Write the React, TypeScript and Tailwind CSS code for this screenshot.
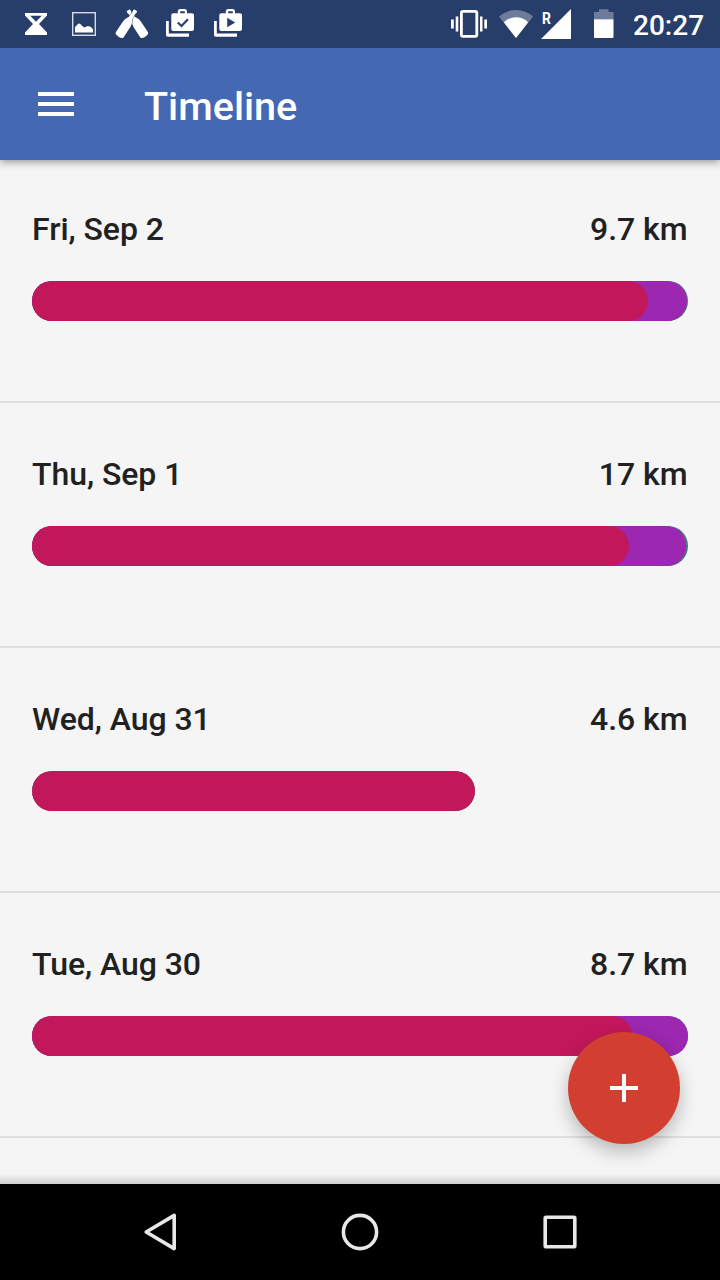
import React from 'react';

interface Day {
  date: string;
  distance: string;
  // bar widths in px, drawn on top of each other
  total: number;
  cycling?: number;
  walking: number;
}

const days: Day[] = [
  { date: 'Fri, Sep 2', distance: '9.7 km', total: 656, cycling: 655.3, walking: 616 },
  { date: 'Thu, Sep 1', distance: '17 km', total: 656, cycling: 654, walking: 597 },
  { date: 'Wed, Aug 31', distance: '4.6 km', total: 443, walking: 443 },
  { date: 'Tue, Aug 30', distance: '8.7 km', total: 656, cycling: 656, walking: 600 },
];

const bottlePath =
  'M-2 0.6Q-2 0 -1.4 0H1.4Q2 0 2 0.6V2.4L1.6 3L2 9Q4.6 13 4.6 16.5V29Q4.6 31.4 0 31.4Q-4.6 31.4 -4.6 29V16.5Q-4.6 13 -2 9L-1.6 3L-2 2.4Z';

const StatusBar: React.FC = () => (
  <div className="flex h-12 justify-between bg-[#283e6a] text-white">
    <div className="flex pl-3">
      {/* Hourglass */}
      <svg className="h-12 w-12" viewBox="0 0 48 48" fill="currentColor">
        <path
          fillRule="evenodd"
          d="M13 13H35V15.5L27 24L35 32.5V35H13V32.5L21 24L13 15.5ZM18.2 15.7L24 21.8L29.8 15.7Z"
        />
      </svg>
      {/* Picture */}
      <svg className="h-12 w-12" viewBox="0 0 48 48" fill="currentColor">
        <rect x="12.7" y="12.7" width="22.6" height="22.6" fill="none" stroke="#d5dae4" strokeWidth="1.4" />
        <path d="M15 32.5V27L18.5 23.5L20 23.8L24 27.5L28 26L31 27L33 29.5V32.5Z" />
      </svg>
      {/* Crossed bottles */}
      <svg className="h-12 w-12" viewBox="0 0 48 48" fill="currentColor">
        <path d={bottlePath} transform="translate(20.2 10.3) rotate(-33)" />
        <path
          d={bottlePath}
          transform="translate(27.6 10.3) rotate(33)"
          stroke="#283e6a"
          strokeWidth="0.8"
          paintOrder="stroke"
        />
      </svg>
      {/* Bags */}
      <svg className="h-12 w-12" viewBox="0 0 48 48" fill="currentColor">
        <path d="M10 21H12.8V33.5H33V36.7H12Q10 36.7 10 34.7Z" />
        <path
          fillRule="evenodd"
          d="M15.3 15Q15.3 13.2 17.3 13.2H21.8V11.5Q21.8 9 24.3 9H28.5Q31 9 31 11.5V13.2H36Q38 13.2 38 15.2V29Q38 31 36 31H17.3Q15.3 31 15.3 29ZM24.2 13.2H28.8V11.3H24.2Z"
        />
        <path d="M21.8 22.5L25.5 26L32 19.3" fill="none" stroke="#283e6a" strokeWidth="2.2" />
      </svg>
      <svg className="h-12 w-12" viewBox="0 0 48 48" fill="currentColor">
        <path d="M10 21H12.8V33.5H33V36.7H12Q10 36.7 10 34.7Z" />
        <path
          fillRule="evenodd"
          d="M15.3 15Q15.3 13.2 17.3 13.2H21.8V11.5Q21.8 9 24.3 9H28.5Q31 9 31 11.5V13.2H36Q38 13.2 38 15.2V29Q38 31 36 31H17.3Q15.3 31 15.3 29ZM24.2 13.2H28.8V11.3H24.2ZM23.2 17.8V27.2L31.2 22.5Z"
        />
      </svg>
    </div>

    <div className="flex pr-4">
      {/* Vibrate */}
      <svg className="h-12 w-9" viewBox="0 0 36 48" fill="currentColor">
        <rect x="10.4" y="11.4" width="15.4" height="25" rx="1.6" fill="none" stroke="currentColor" strokeWidth="2.8" />
        <path d="M0 19.5H2.8V28.5H0ZM4.7 16.5H7.3V31.5H4.7ZM29 16.5H31.5V31.5H29ZM33.3 19.5H36V28.5H33.3Z" />
      </svg>
      {/* Wifi */}
      <svg className="ml-3 h-12 w-[34px]" viewBox="0 0 34 48" fill="currentColor">
        <path fillOpacity="0.32" d="M17 38L0 16.5Q7.5 10 17 10Q26.5 10 34 16.5Z" />
        <path d="M17 38L4.8 22.2Q10 17.3 17 17.3Q24 17.3 29.2 22.2Z" />
      </svg>
      {/* Cell signal */}
      <div className="relative ml-2 h-12 w-[30px]">
        <svg className="h-12 w-[30px]" viewBox="0 0 30 48" fill="currentColor">
          <path d="M30 9V39H0Z" />
        </svg>
        <span className="absolute left-px top-2.5 origin-left scale-x-[0.82] text-[17px] font-bold leading-4">R</span>
      </div>
      {/* Battery */}
      <svg className="ml-[23px] h-12 w-5" viewBox="0 0 20 48" fill="currentColor">
        <path fillOpacity="0.32" d="M0 12H5V9.3H14.5V12H19.5V19.3H0Z" />
        <path d="M0 19.3H19.5V37Q19.5 38 18.5 38H1Q0 38 0 37Z" />
      </svg>
      <span className="ml-[19px] mt-0.5 w-[71px] text-[28px] font-medium leading-[48px]">20:27</span>
    </div>
  </div>
);

const AppBar: React.FC = () => (
  <header className="flex h-28 items-center bg-[#4468b1] text-white">
    <button className="ml-[38px] flex w-9 flex-col gap-1.5" aria-label="Open menu">
      <span className="h-1 w-full bg-white" />
      <span className="h-1 w-full bg-white" />
      <span className="h-1 w-full bg-white" />
    </button>
    <h1 className="ml-[70px] pt-1.5 text-[39.6px] font-medium leading-[48px]">Timeline</h1>
  </header>
);

const DayRow: React.FC<{ day: Day }> = ({ day }) => (
  <li className="h-[245px] border-b-2 border-[#dfdfdf] px-8 pt-[51px]">
    <div className="flex justify-between pr-[0.5px] text-[32px] font-medium leading-10 tracking-[-0.05px] text-[#212121]">
      <span>{day.date}</span>
      <span>{day.distance}</span>
    </div>
    <div className="mt-8 grid h-10">
      <div className="col-start-1 row-start-1 rounded-[20px] bg-[#4b7482]" style={{ width: day.total }} />
      {day.cycling && (
        <div className="col-start-1 row-start-1 rounded-[20px] bg-[#9c27b0]" style={{ width: day.cycling }} />
      )}
      <div className="col-start-1 row-start-1 rounded-[20px] bg-[#c2185b]" style={{ width: day.walking }} />
    </div>
  </li>
);

const NavBar: React.FC = () => (
  <nav className="flex h-24 items-center justify-center gap-[152px] bg-black text-[#e8e8e8]">
    <svg className="h-12 w-12" viewBox="0 0 48 48" fill="none" stroke="currentColor" strokeWidth="3.6">
      <path d="M10.2 24L38.2 7.4V40.6Z" strokeLinejoin="round" />
    </svg>
    <svg className="h-12 w-12" viewBox="0 0 48 48" fill="none" stroke="currentColor" strokeWidth="3.6">
      <circle cx="24" cy="24" r="16.6" />
    </svg>
    <svg className="h-12 w-12" viewBox="0 0 48 48" fill="none" stroke="currentColor" strokeWidth="3.6">
      <rect x="9.2" y="9.2" width="29.6" height="29.6" rx="1" />
    </svg>
  </nav>
);

const App: React.FC = () => {
  return (
    <div className="flex h-[1280px] w-[720px] flex-col overflow-hidden bg-[#f5f5f5] font-['Roboto',sans-serif]">
      <div className="relative z-10 shadow-[0_2px_8px_rgba(0,0,0,0.4)]">
        <StatusBar />
        <AppBar />
      </div>

      <main className="relative min-h-0 flex-1">
        <ul className="-mt-0.5">
          {days.map((day) => (
            <DayRow key={day.date} day={day} />
          ))}
        </ul>

        {/* Fade above the navigation bar */}
        <div className="absolute inset-x-0 bottom-0 h-2.5 bg-linear-to-t from-black/16 to-transparent" />

        <button
          className="absolute bottom-10 right-10 flex size-28 items-center justify-center rounded-full bg-[#d23f31] shadow-[0_8px_18px_rgba(0,0,0,0.25)]"
          aria-label="Add"
        >
          <svg className="size-7" viewBox="0 0 28 28" fill="white">
            <path d="M12 0H16V12H28V16H16V28H12V16H0V12H12Z" />
          </svg>
        </button>
      </main>

      <NavBar />
    </div>
  );
};

export default App;
